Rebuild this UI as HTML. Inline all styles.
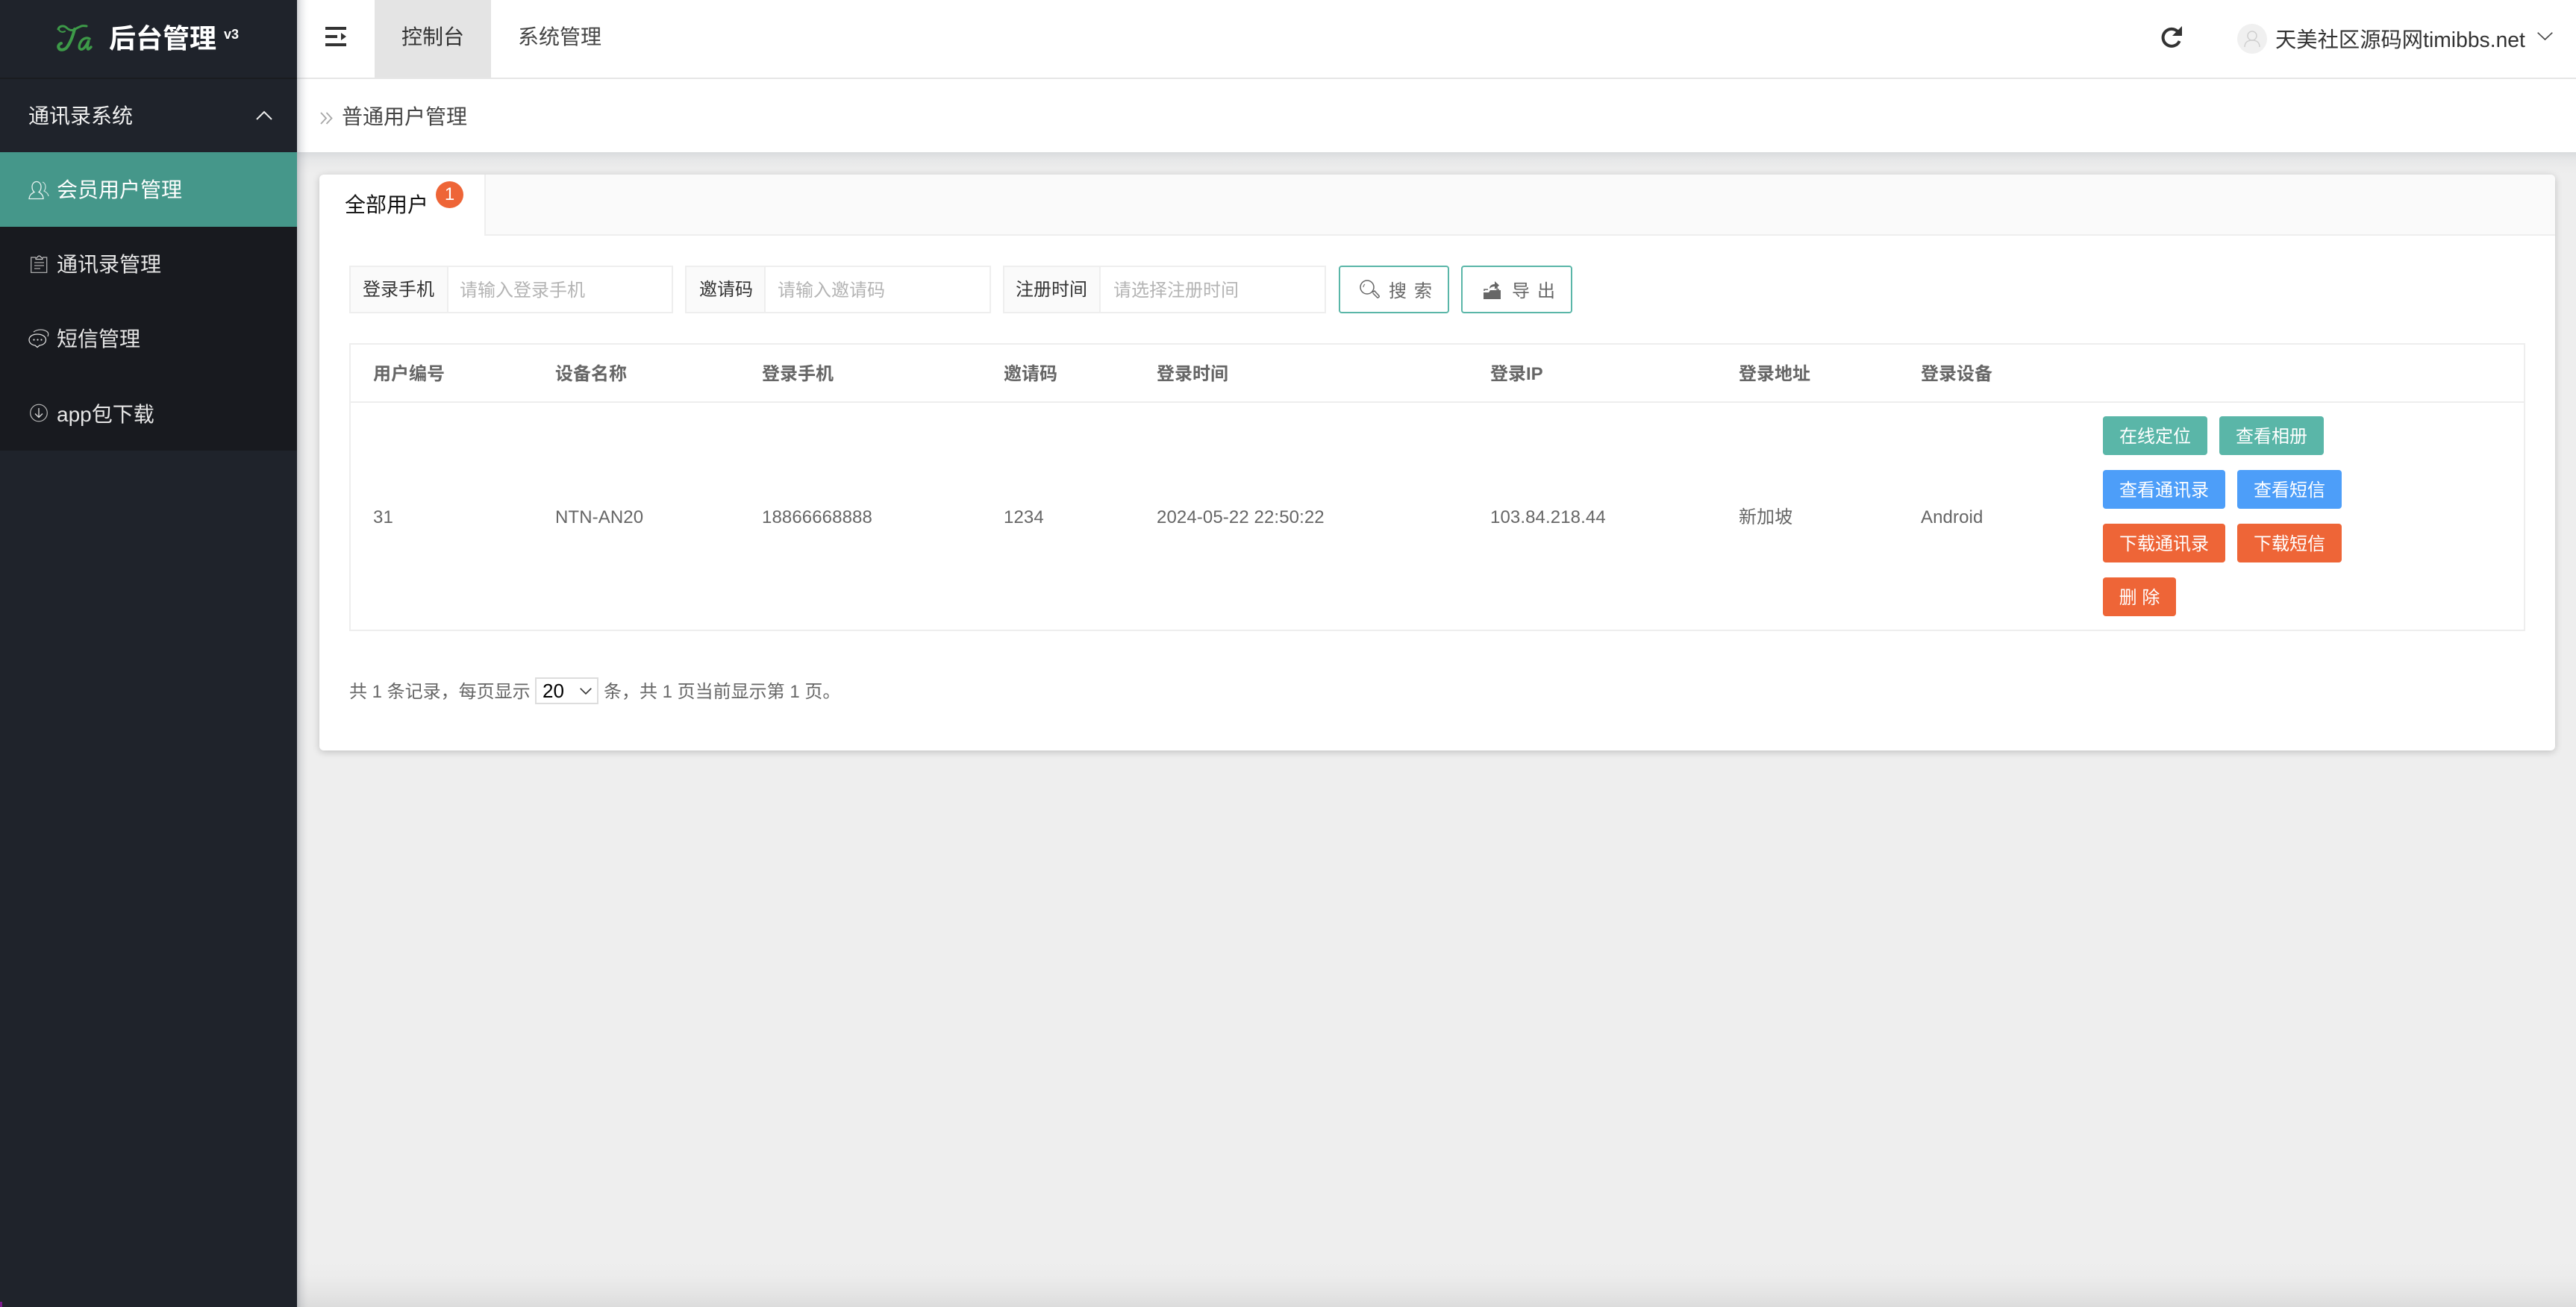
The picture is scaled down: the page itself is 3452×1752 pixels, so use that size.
<!DOCTYPE html>
<html lang="zh-CN">
<head>
<meta charset="utf-8">
<title>后台管理</title>
<style>
html,body{margin:0;padding:0;width:3452px;height:1752px;overflow:hidden;background:#eee;}
body{position:relative;font-family:"Liberation Sans","Noto Sans CJK SC",sans-serif;color:#666;}
.a{position:absolute;white-space:nowrap;}
.t{position:absolute;white-space:pre;line-height:40px;height:40px;}
svg{position:absolute;display:block;overflow:visible;}
.btn{position:absolute;height:52px;line-height:56px;border-radius:4px;color:#fff;font-size:24px;text-align:center;}
.g{background:#5ab6a8}.b{background:#4d9ef9}.o{background:#ee6537}
.box{position:absolute;box-sizing:border-box;top:356px;height:64px;border:2px solid #eee;background:#fff;}
.lab{position:absolute;box-sizing:border-box;top:356px;height:64px;background:#fafafa;border:2px solid #eee;font-size:24px;color:#333;line-height:62px;}
.ph{position:absolute;top:370px;font-size:24px;color:#b4b4b4;line-height:40px;white-space:pre;}
.th{position:absolute;top:482px;font-size:24px;line-height:40px;color:#666;font-weight:700;white-space:pre;}
.td{position:absolute;top:674px;font-size:24px;line-height:40px;color:#666;white-space:pre;letter-spacing:.1px;}
.m{position:absolute;left:0;width:398px;height:100px;background:#181a1f;}
</style>
</head>
<body>

<!-- main top bars -->
<div class="a" style="left:398px;top:0;width:3054px;height:104px;background:#fff"></div>
<div class="a" style="left:398px;top:104px;width:3054px;height:2px;background:#e6e6e6"></div>
<div class="a" style="left:398px;top:106px;width:3054px;height:98px;background:#fff"></div>
<div class="a" style="left:398px;top:204px;width:3054px;height:30px;background:linear-gradient(#d9dbdd 0,#e6e7e8 10px,#ececec 22px,#eee 30px)"></div>
<div class="a" style="left:398px;top:1690px;width:3054px;height:62px;background:linear-gradient(#eee 0,#ececec 20px,#e4e4e4 45px,#dcdcdc 62px)"></div>

<!-- hamburger -->
<svg style="left:436px;top:36px" width="28" height="28" viewBox="0 0 28 28"><rect x="0" y="0" width="28" height="4" fill="#333"/><rect x="0" y="11" width="16" height="4" fill="#333"/><path d="M21 8l7 5-7 5z" fill="#333"/><rect x="0" y="22" width="28" height="4" fill="#333"/></svg>

<div class="a" style="left:502px;top:0;width:156px;height:104px;background:#e4e4e4"></div>
<div class="t" style="left:538px;top:30px;font-size:28px;color:#333">控制台</div>
<div class="t" style="left:694px;top:30px;font-size:28px;color:#444">系统管理</div>

<!-- refresh -->
<svg style="left:2896px;top:35px" width="28" height="28" viewBox="0 0 28 28"><path d="M22.5 7.5A11.5 11.5 0 1 0 24.6 20" fill="none" stroke="#333" stroke-width="4"/><path d="M28 0V13H15z" fill="#333"/></svg>
<!-- avatar -->
<div class="a" style="left:2998px;top:32px;width:40px;height:40px;border-radius:50%;background:#f0f0f0"></div>
<svg style="left:3006px;top:41px" width="24" height="24" viewBox="0 0 24 24"><circle cx="12" cy="7" r="6" fill="none" stroke="#cfcfcf" stroke-width="1.5"/><path d="M2 22c0-6 4-9 10-9s10 3 10 9" fill="none" stroke="#cfcfcf" stroke-width="1.5"/></svg>
<div class="t" style="left:3049px;top:33px;font-size:28.300px;color:#333">天美社区源码网timibbs.net</div>
<svg style="left:3400px;top:43px" width="21" height="11" viewBox="0 0 21 11"><path d="M.7.7l9.800 9.300L20.300.7" fill="none" stroke="#444" stroke-width="1.600"/></svg>

<!-- breadcrumb -->
<svg style="left:429px;top:150px" width="17" height="17" viewBox="0 0 17 17"><path d="M1 1l7 7.500L1 16M8.500 1l7 7.500-7 7.500" fill="none" stroke="#a8a8a8" stroke-width="1.800"/></svg>
<div class="t" style="left:458px;top:137px;font-size:28px;color:#444">普通用户管理</div>

<!-- card -->
<div class="a" style="left:428px;top:234px;width:2996px;height:772px;background:#fff;border-radius:6px;box-shadow:0 2px 10px rgba(0,0,0,.2)"></div>
<div class="a" style="left:650px;top:234px;width:2774px;height:80px;background:#fafafa;border-radius:0 6px 0 0"></div>
<div class="a" style="left:649px;top:234px;width:2px;height:82px;background:#eee"></div>
<div class="a" style="left:649px;top:314px;width:2775px;height:2px;background:#eee"></div>
<div class="t" style="left:462px;top:255px;font-size:28px;color:#111">全部用户</div>
<div class="a" style="left:584px;top:243px;width:37px;height:36px;border-radius:50%;background:#ee6537;color:#fff;font-size:24px;line-height:36px;text-align:center">1</div>

<!-- search -->
<div class="box" style="left:468px;width:434px"></div>
<div class="lab" style="left:468px;width:133px;padding-left:16px">登录手机</div>
<div class="ph" style="left:616px">请输入登录手机</div>
<div class="box" style="left:918px;width:410px"></div>
<div class="lab" style="left:918px;width:108px;padding-left:17px">邀请码</div>
<div class="ph" style="left:1042px">请输入邀请码</div>
<div class="box" style="left:1344px;width:433px"></div>
<div class="lab" style="left:1344px;width:130px;padding-left:15px;width:131px">注册时间</div>
<div class="ph" style="left:1492px">请选择注册时间</div>

<div class="a" style="left:1794px;top:356px;width:148px;height:64px;box-sizing:border-box;border:2px solid #5ab6a8;border-radius:4px;background:#fff"></div>
<svg style="left:1822px;top:375px" width="27" height="27" viewBox="0 0 27 27"><circle cx="10" cy="10" r="9" fill="none" stroke="#666" stroke-width="1.500"/><path d="M5 10a5 5 0 0 1 2-4" fill="none" stroke="#777" stroke-width="1.200"/><path d="M17 17l3-2 6 6.500c.7 1-.8 3-2.200 2.500l-6-6" fill="none" stroke="#666" stroke-width="1.500"/></svg>
<div class="t" style="left:1861px;top:371px;font-size:24px;color:#666;letter-spacing:10px">搜索</div>

<div class="a" style="left:1958px;top:356px;width:149px;height:64px;box-sizing:border-box;border:2px solid #5ab6a8;border-radius:4px;background:#fff"></div>
<svg style="left:1988px;top:377px" width="24" height="25" viewBox="0 0 24 25"><path d="M0 24V15h7l2-3h14v12z" fill="#666"/><path d="M1 13V11h5M18 8v3h3" fill="none" stroke="#666" stroke-width="1.500"/><path d="M8 10c0-4 3-6 7-6V0l6 5.500-6 5.500V7c-3 0-5 1-7 3z" fill="#666"/></svg>
<div class="t" style="left:2026px;top:371px;font-size:24px;color:#666;letter-spacing:10px">导出</div>

<!-- table -->
<div class="a" style="left:468px;top:460px;width:2916px;height:386px;box-sizing:border-box;border:2px solid #eee"></div>
<div class="a" style="left:468px;top:538px;width:2916px;height:2px;background:#eee"></div>
<div class="th" style="left:500px">用户编号</div>
<div class="th" style="left:744px">设备名称</div>
<div class="th" style="left:1021px">登录手机</div>
<div class="th" style="left:1345px">邀请码</div>
<div class="th" style="left:1550px">登录时间</div>
<div class="th" style="left:1997px">登录IP</div>
<div class="th" style="left:2330px">登录地址</div>
<div class="th" style="left:2574px">登录设备</div>

<div class="td" style="left:500px">31</div>
<div class="td" style="left:744px">NTN-AN20</div>
<div class="td" style="left:1021px">18866668888</div>
<div class="td" style="left:1345px">1234</div>
<div class="td" style="left:1550px">2024-05-22 22:50:22</div>
<div class="td" style="left:1997px">103.84.218.44</div>
<div class="td" style="left:2330px">新加坡</div>
<div class="td" style="left:2574px">Android</div>

<div class="btn g" style="left:2818px;top:558px;width:140px">在线定位</div>
<div class="btn g" style="left:2974px;top:558px;width:140px">查看相册</div>
<div class="btn b" style="left:2818px;top:630px;width:164px">查看通讯录</div>
<div class="btn b" style="left:2998px;top:630px;width:140px">查看短信</div>
<div class="btn o" style="left:2818px;top:702px;width:164px">下载通讯录</div>
<div class="btn o" style="left:2998px;top:702px;width:140px">下载短信</div>
<div class="btn o" style="left:2818px;top:774px;width:98px;white-space:pre">删 除</div>

<!-- pagination -->
<div class="t" style="left:468px;top:908px;font-size:24px;color:#666">共 1 条记录，每页显示</div>
<div class="a" style="left:717px;top:908px;width:85px;height:36px;box-sizing:border-box;border:2px solid #ddd;background:#fff"></div>
<div class="t" style="left:727px;top:906px;font-size:26px;color:#000">20</div>
<svg style="left:777px;top:922px" width="16" height="9" viewBox="0 0 16 9"><path d="M.7.7L8 8 15.300.7" fill="none" stroke="#333" stroke-width="1.600"/></svg>
<div class="t" style="left:809px;top:908px;font-size:24px;color:#666">条，共 1 页当前显示第 1 页。</div>

<!-- sidebar -->
<div class="a" style="left:398px;top:0;width:16px;height:1752px;background:linear-gradient(90deg,rgba(120,125,135,.36),rgba(120,125,135,.14) 6px,rgba(120,125,135,.03) 12px,rgba(120,125,135,0))"></div>
<div class="a" style="left:0;top:0;width:398px;height:1752px;background:#1f232b"></div>
<div class="a" style="left:0;top:104px;width:398px;height:2px;background:#1a1c20"></div>
<div class="a" style="left:0;top:1745px;width:3px;height:7px;background:#7a1a8a"></div>

<!-- logo: script Ta -->
<svg style="left:76px;top:33px" width="50" height="38" viewBox="0 0 50 38"><g fill="none" stroke="#3d9a48" stroke-linecap="round"><path d="M2 6c2-5 8-5 11-2 3 3 7 5 12 2 3-2 6-3 8-4 2-1 5 0 7 0" stroke-width="3"/><path d="M3 6c0 3 4 5 8 3" stroke-width="2"/><path d="M24 6c-2 8-5 17-10 24-3 4-9 5-11 2-2-3 0-6 3-7" stroke-width="4"/><path d="M44 19c-3-2-8-1-11 3-3 4-4 10-1 11 3 1 7-3 11-12-1 5-3 11-1 12 1 0 2-1 4-3" stroke-width="3.400"/></g></svg>
<div class="t" style="left:146px;top:32px;font-size:36px;color:#fff;font-weight:700">后台管理</div>
<div class="t" style="left:300px;top:26px;font-size:18px;color:#fff;font-weight:700">v3</div>

<div class="t" style="left:38px;top:136px;font-size:28px;color:#f0f0f0">通讯录系统</div>
<svg style="left:343px;top:149px" width="22" height="12" viewBox="0 0 22 12"><path d="M1 11L11 1l10 10" fill="none" stroke="#eee" stroke-width="2"/></svg>

<div class="m" style="top:204px;background:#45978a"></div>
<div class="m" style="top:304px"></div>
<div class="m" style="top:404px"></div>
<div class="m" style="top:504px"></div>

<svg style="left:38px;top:240px" width="28" height="28" viewBox="0 0 28 28"><path d="M1 26.500c.5-5 3-7 7-9-2-1.500-3-4-3-7 0-4 2.500-7 6-7s6 3 6 7c0 3-1 5.500-3 7 3 1.500 6 4 6 9z" fill="none" stroke="#e8f2f0" stroke-width="1.300"/><path d="M19 4c2.500 1 4 3.500 4 6.500 0 2.500-1 4.500-2 5.500 3 1.500 5.500 3.500 6 7" fill="none" stroke="#cfe3df" stroke-width="1.200"/></svg>
<div class="t" style="left:76px;top:235px;font-size:28px;color:#fff">会员用户管理</div>

<svg style="left:41px;top:342px" width="23" height="24" viewBox="0 0 23 24"><path d="M7 3H.7v20.300h21V3H16" fill="none" stroke="#bbb" stroke-width="1.200"/><path d="M7 5.500V4c2-.3 2.500-3 4.500-3s2.500 2.700 4.500 3v1.500z" fill="none" stroke="#ccc" stroke-width="1.200"/><path d="M5 10h13M5 14h13M5 18h8" stroke="#aaa" stroke-width="1.200" fill="none"/></svg>
<div class="t" style="left:76px;top:335px;font-size:28px;color:#e6e6e6">通讯录管理</div>

<svg style="left:38px;top:441px" width="28" height="26" viewBox="0 0 28 26"><path d="M12 7C5.500 7 1 10 1 14.500c0 4 3.500 7 8 7.500l3 2.500 3-2.500c5-.5 8.500-3.500 8.500-7.500C23.500 10 18.500 7 12 7z" fill="none" stroke="#ddd" stroke-width="1.300"/><circle cx="7.500" cy="14.500" r="1.100" fill="#ddd"/><circle cx="12.500" cy="14.500" r="1.100" fill="#ddd"/><circle cx="17.500" cy="14.500" r="1.100" fill="#ddd"/><path d="M7 4c5-4 13-4 18-.5 2 1.500 2 4 1 6.500" fill="none" stroke="#ccc" stroke-width="1.200"/></svg>
<div class="t" style="left:76px;top:435px;font-size:28px;color:#e6e6e6">短信管理</div>

<svg style="left:40px;top:541px" width="24" height="25" viewBox="0 0 24 25"><circle cx="12" cy="12.500" r="11.300" fill="none" stroke="#bbb" stroke-width="1.200"/><path d="M12 6v12M7 13.500l5 5 5-5" fill="none" stroke="#ddd" stroke-width="1.300"/></svg>
<div class="t" style="left:76px;top:536px;font-size:28px;color:#e6e6e6">app包下载</div>

</body>
</html>
